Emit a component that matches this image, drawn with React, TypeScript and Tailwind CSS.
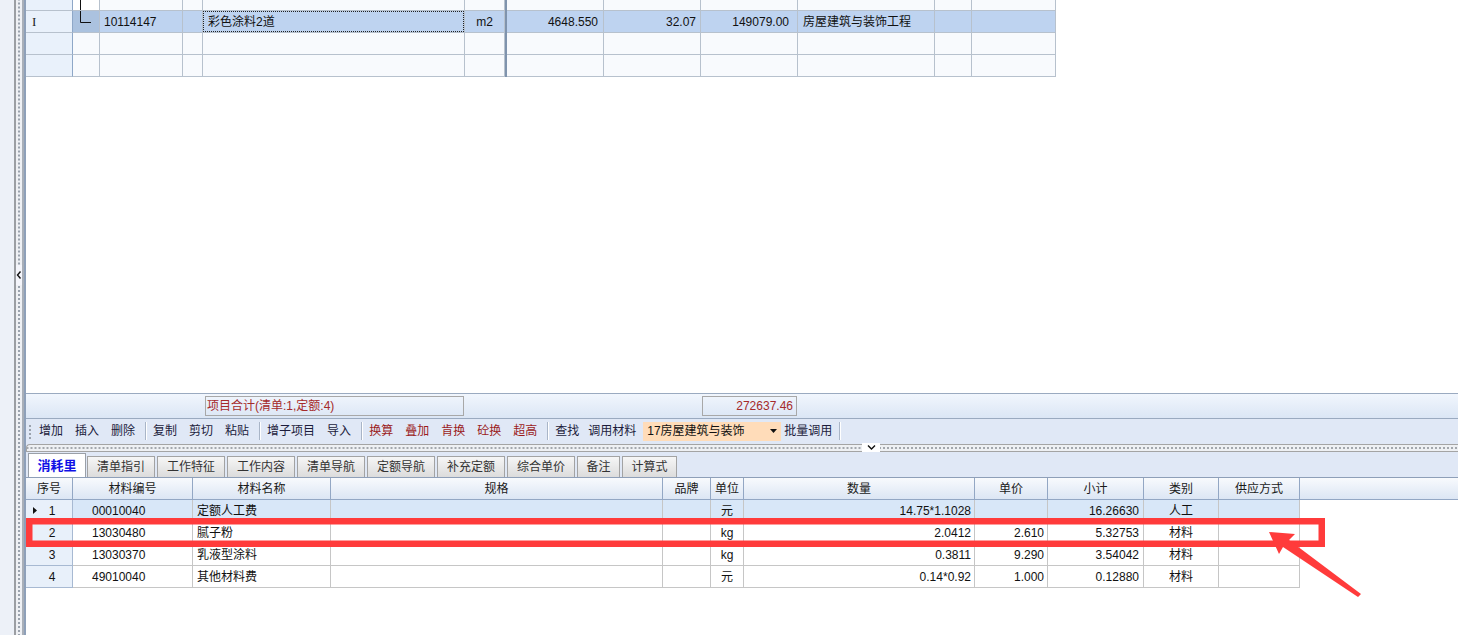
import React from 'react'

/* ── shared class strings ── */
const FONT = "font-['Liberation_Sans','Noto_Sans_CJK_SC',sans-serif] text-[12px] leading-none"
const TOP_CELL = 'shrink-0 h-full border-r border-b border-[#b7c1cd] flex items-center'
const HEAD_CELL = 'shrink-0 h-full border-r border-[#93a7c4] flex items-center justify-center'
const DATA_CELL = 'shrink-0 h-full border-r border-b border-[#c6c6c6] flex items-center'
const DOTS_Y = 'bg-[linear-gradient(to_bottom,#9aa2ad_50%,transparent_50%)] bg-[length:2px_4px] bg-repeat-y bg-center'
const DOTS_X = 'bg-[linear-gradient(to_right,#a3a7ad_50%,transparent_50%)] bg-[length:4px_2px] bg-repeat-x bg-center'

/* ── upper grid ── */
function TopRow({ h, selected, partial }: { h: string; selected?: boolean; partial?: boolean }) {
  const bg = selected ? 'bg-[#bed3f0]' : 'bg-[#f8fafd]'
  return (
    <div className={`flex ${h}`}>
      <div className={`${TOP_CELL} w-[47px] bg-[#e9f1fb] border-r-[#8ea7c7] pl-[6px]`}>
        {selected && <span className="font-['Liberation_Serif',serif] text-[13px] text-[#222]">I</span>}
      </div>
      <div className={`${TOP_CELL} w-[27px] ${selected ? 'bg-[#abc2df]' : partial ? 'bg-white' : bg}`}>
        {partial && (
          <svg width="27" height="10" className="block">
            <path d="M7.5 0V10" stroke="#111" strokeWidth="1" />
          </svg>
        )}
        {selected && (
          <svg width="27" height="21" className="block">
            <path d="M7.5 0V11.5H18" stroke="#111" strokeWidth="1" fill="none" />
          </svg>
        )}
      </div>
      <div className={`${TOP_CELL} w-[83px] ${bg} pl-[4px] text-[#111]`}>{selected && '10114147'}</div>
      <div className={`${TOP_CELL} w-[20px] ${bg}`} />
      <div className={`${TOP_CELL} w-[262px] ${bg}`}>
        {selected && (
          <div className="h-full w-full border border-dotted border-[#222] flex items-center pl-[4px] text-[#111]">
            彩色涂料2道
          </div>
        )}
      </div>
      <div className={`${TOP_CELL} w-[40px] ${bg} justify-center text-[#111]`}>{selected && 'm2'}</div>
      <div className="shrink-0 w-[2px] h-full bg-[#7f93ad]" />
      <div className={`${TOP_CELL} w-[97px] ${bg} justify-end pr-[5px] text-[#111]`}>{selected && '4648.550'}</div>
      <div className={`${TOP_CELL} w-[97px] ${bg} justify-end pr-[4px] text-[#111]`}>{selected && '32.07'}</div>
      <div className={`${TOP_CELL} w-[97px] ${bg} justify-end pr-[8px] text-[#111]`}>{selected && '149079.00'}</div>
      <div className={`${TOP_CELL} w-[137px] ${bg} pl-[5px] text-[#111]`}>{selected && '房屋建筑与装饰工程'}</div>
      <div className={`${TOP_CELL} w-[37px] ${bg}`} />
      <div className={`${TOP_CELL} w-[84px] ${bg}`} />
    </div>
  )
}

/* ── toolbar ── */
type Tool = { t: 'btn'; label: string; red?: boolean; pad?: string } | { t: 'sep' } | { t: 'combo' }

const TOOLS: Tool[] = [
  { t: 'btn', label: '增加' }, { t: 'btn', label: '插入' }, { t: 'btn', label: '删除' }, { t: 'sep' },
  { t: 'btn', label: '复制' }, { t: 'btn', label: '剪切' }, { t: 'btn', label: '粘贴' }, { t: 'sep' },
  { t: 'btn', label: '增子项目' }, { t: 'btn', label: '导入' }, { t: 'sep' },
  { t: 'btn', label: '换算', red: true }, { t: 'btn', label: '叠加', red: true }, { t: 'btn', label: '肯换', red: true },
  { t: 'btn', label: '砼换', red: true }, { t: 'btn', label: '超高', red: true }, { t: 'sep' },
  { t: 'btn', label: '查找' }, { t: 'btn', label: '调用材料', pad: 'pl-[3px] pr-[7px]' }, { t: 'combo' },
  { t: 'btn', label: '批量调用', pad: 'px-[3px]' }, { t: 'sep' },
]

function Toolbar() {
  return (
    <div className="h-[25px] shrink-0 border-t border-[#9aaac0] bg-[#e0e8f6] flex items-center">
      <div className={`ml-[3px] mr-[2px] w-[2px] h-[16px] ${DOTS_Y}`} />
      {TOOLS.map((tool, i) => {
        if (tool.t === 'sep') return <div key={i} className="ml-[4px] w-[2px] h-[18px] border-l border-[#a9b5c7] border-r border-r-white" />
        if (tool.t === 'combo')
          return (
            <div key={i} className="w-[138px] h-[19px] bg-[#ffdcb9] flex items-center pl-[4px] text-[#111]">
              <span className="flex-1">17房屋建筑与装饰</span>
              <svg width="7" height="4" className="mr-[4px]"><path d="M0 0H7L3.5 4Z" fill="#111" /></svg>
            </div>
          )
        return (
          <div key={i} className={`h-[19px] flex items-center ${tool.pad ?? 'px-[6px]'} ${tool.red ? 'text-[#9b1c1c]' : 'text-[#1c1c3c]'}`}>
            {tool.label}
          </div>
        )
      })}
    </div>
  )
}

/* ── tabs ── */
const TABS = [
  { label: '清单指引', w: 'w-[68px]' }, { label: '工作特征', w: 'w-[68px]' }, { label: '工作内容', w: 'w-[68px]' },
  { label: '清单导航', w: 'w-[68px]' }, { label: '定额导航', w: 'w-[68px]' }, { label: '补充定额', w: 'w-[68px]' },
  { label: '综合单价', w: 'w-[68px]' }, { label: '备注', w: 'w-[43px]' }, { label: '计算式', w: 'w-[55px]' },
]

/* ── lower grid ── */
const COLS = [
  { w: 'w-[47px]', label: '序号' },
  { w: 'w-[120px]', label: '材料编号' },
  { w: 'w-[138px]', label: '材料名称' },
  { w: 'w-[332px]', label: '规格' },
  { w: 'w-[48px]', label: '品牌' },
  { w: 'w-[33px]', label: '单位' },
  { w: 'w-[231px]', label: '数量' },
  { w: 'w-[73px]', label: '单价' },
  { w: 'w-[96px]', label: '小计' },
  { w: 'w-[75px]', label: '类别' },
  { w: 'w-[81px]', label: '供应方式' },
]

const ROWS = [
  { no: '1', code: '00010040', name: '定额人工费', unit: '元', qty: '14.75*1.1028', price: '', sub: '16.26630', cat: '人工' },
  { no: '2', code: '13030480', name: '腻子粉', unit: 'kg', qty: '2.0412', price: '2.610', sub: '5.32753', cat: '材料' },
  { no: '3', code: '13030370', name: '乳液型涂料', unit: 'kg', qty: '0.3811', price: '9.290', sub: '3.54042', cat: '材料' },
  { no: '4', code: '49010040', name: '其他材料费', unit: '元', qty: '0.14*0.92', price: '1.000', sub: '0.12880', cat: '材料' },
]

function MaterialGrid() {
  return (
    <div className="flex-1 bg-white border-t border-[#8e9fb8]">
      {/* header */}
      <div className="h-[22px] flex border-b border-[#93a7c4] bg-linear-to-b from-[#f8fafd] to-[#dce6f4] text-[#1a1a1a]">
        {COLS.map(c => (
          <div key={c.label} className={`${HEAD_CELL} ${c.w}`}>{c.label}</div>
        ))}
      </div>
      {/* rows */}
      {ROWS.map((r, i) => {
        const bg = i === 0 ? 'bg-[#d8e7f8]' : 'bg-white'
        return (
          <div key={r.no} className="h-[22px] flex text-[#111]">
            <div className="relative shrink-0 w-[47px] h-full bg-[#e8f0fa] border-r border-b border-[#a7b9d2] flex items-center justify-center pl-[6px]">
              {i === 0 && (
                <svg width="4" height="7" className="absolute left-[7px] top-[7px]"><path d="M0 0L4 3.5L0 7Z" fill="#111" /></svg>
              )}
              {r.no}
            </div>
            <div className={`${DATA_CELL} w-[120px] ${bg} pl-[19px]`}>{r.code}</div>
            <div className={`${DATA_CELL} w-[138px] ${bg} pl-[4px]`}>{r.name}</div>
            <div className={`${DATA_CELL} w-[332px] ${bg}`} />
            <div className={`${DATA_CELL} w-[48px] ${bg}`} />
            <div className={`${DATA_CELL} w-[33px] ${bg} justify-center`}>{r.unit}</div>
            <div className={`${DATA_CELL} w-[231px] ${bg} justify-end pr-[3px]`}>{r.qty}</div>
            <div className={`${DATA_CELL} w-[73px] ${bg} justify-end pr-[3px]`}>{r.price}</div>
            <div className={`${DATA_CELL} w-[96px] ${bg} justify-end pr-[4px]`}>{r.sub}</div>
            <div className={`${DATA_CELL} w-[75px] ${bg} justify-center`}>{r.cat}</div>
            <div className={`${DATA_CELL} w-[81px] ${bg}`} />
          </div>
        )
      })}
    </div>
  )
}

export default function App() {
  return (
    <div className={`relative w-[1458px] h-[635px] overflow-hidden flex bg-white ${FONT}`}>
      {/* ── left collapsed panel + splitter ── */}
      <div className="flex shrink-0 h-full">
        <div className="w-[14px] bg-[#edf1f8]" />
        <div className="w-[2px] bg-[#9b9ea3]" />
        <div className="w-[6px] flex flex-col bg-[#eef0f4]">
          <div className={`h-[265px] ${DOTS_Y}`} />
          <div className="h-[20px] bg-[#f4f5fb] flex items-center justify-center">
            <svg width="6" height="10"><path d="M4.5 1.5L1.5 5L4.5 8.5" stroke="#111" strokeWidth="1.4" fill="none" /></svg>
          </div>
          <div className={`flex-1 ${DOTS_Y}`} />
        </div>
        <div className="w-[2px] bg-[#a9afb8]" />
        <div className="w-[2px] bg-[#8ea0b9]" />
      </div>

      {/* ── main ── */}
      <div className="flex-1 flex flex-col min-w-0">
        {/* upper bill grid */}
        <div className="h-[393px] shrink-0 bg-white">
          <div className="w-[1030px]">
            <TopRow h="h-[11px]" partial />
            <TopRow h="h-[22px]" selected />
            <TopRow h="h-[22px]" />
            <TopRow h="h-[22px]" />
          </div>
        </div>

        {/* totals */}
        <div className="h-[25px] shrink-0 border-t border-[#9aaac0] bg-linear-to-b from-[#f1f6fd] to-[#dbe6f5] flex items-center">
          <div className="ml-[179px] w-[259px] h-[20px] border border-[#a8a8a8] flex items-center pl-[1px] text-[#a52a2a]">
            项目合计(清单:1,定额:4)
          </div>
          <div className="ml-[238px] w-[95px] h-[20px] border border-[#a8a8a8] flex items-center justify-end pr-[3px] text-[#a52a2a]">
            272637.46
          </div>
        </div>

        <Toolbar />

        {/* horizontal splitter */}
        <div className="h-[9px] shrink-0 bg-[#e0e8f6] flex items-end">
          <div className={`w-[836px] shrink-0 h-[8px] rounded-tl-[4px] border-t border-b border-l border-[#a4a4a4] bg-[#eef0f3] ${DOTS_X}`} />
          <div className="w-[18px] shrink-0 h-[9px] bg-white flex items-center justify-center">
            <svg width="9" height="5"><path d="M1 0.5L4.5 4L8 0.5" stroke="#111" strokeWidth="1.4" fill="none" /></svg>
          </div>
          <div className={`flex-1 h-[8px] border-t border-b border-[#a4a4a4] bg-[#eef0f3] ${DOTS_X}`} />
        </div>

        {/* tabs */}
        <div className="h-[25px] shrink-0 bg-[#e0e8f6] flex items-end pl-[2px]">
          <div className="w-[58px] h-[24px] bg-white border-t border-l border-r border-[#9aa0a8] flex items-center justify-center text-[13px] font-bold text-[#1010e6]">
            消耗里
          </div>
          {TABS.map((t, i) => (
            <div
              key={t.label}
              className={`${t.w} ${i === 0 ? 'ml-[1px]' : 'ml-[2px]'} h-[21px] bg-linear-to-b from-[#f6f6f6] to-[#dcdcdc] border-t border-l border-r border-[#a3a3a3] flex items-center justify-center text-[#333]`}
            >
              {t.label}
            </div>
          ))}
        </div>

        <MaterialGrid />
      </div>

      {/* ── red annotation overlay ── */}
      <svg className="absolute inset-0 pointer-events-none" width="1458" height="635">
        <rect x="29.25" y="521.25" width="1292.5" height="22.5" fill="none" stroke="#ff3b3b" strokeWidth="6.5" />
        <polygon points="1269,532 1295,534 1289,540 1361,594 1358,597 1283,547 1279,554" fill="#ff3b3b" />
      </svg>
    </div>
  )
}
